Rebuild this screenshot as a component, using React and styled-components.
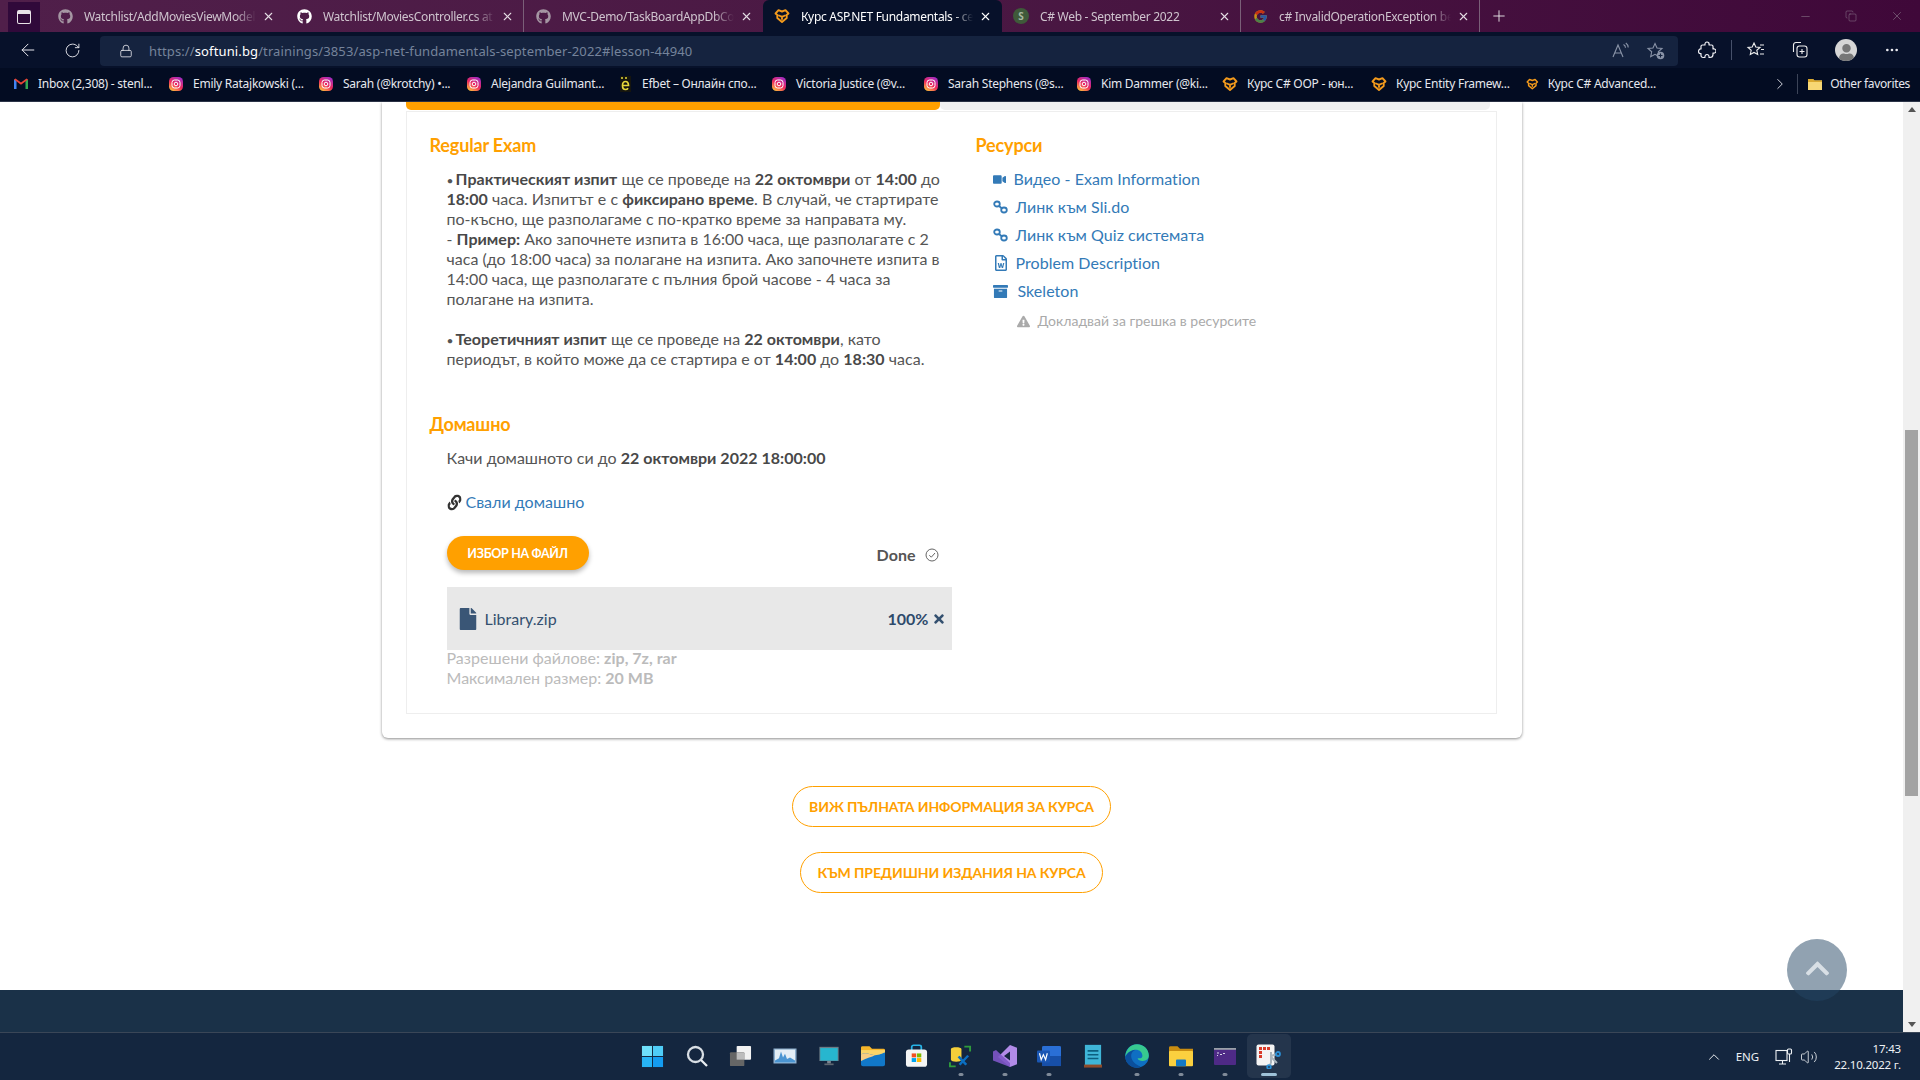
import React from 'react'
import styled, { createGlobalStyle } from 'styled-components'
import { ArrowLeft, RotateCw, Lock, X, Plus, Minus, Copy, ChevronRight, ChevronUp, MoreHorizontal, Volume2 } from 'lucide-react'
import { FaGithub, FaVideo, FaRegFileWord, FaArchive, FaExclamationTriangle, FaFile, FaTimes, FaLink, FaUser, FaChevronUp } from 'react-icons/fa'
import { FcGoogle } from 'react-icons/fc'

const GlobalStyle = createGlobalStyle`
    html, body {
        margin: 0;
        height: 100%;
        overflow: hidden;
        background: #fff;
    }
    * {
        box-sizing: border-box;
    }
`

const Screen = styled.div`
    display: flex;
    flex-direction: column;
    height: 1080px;
    width: 1920px;
    font-family: 'Lato', 'Noto Sans', sans-serif;
`

/* browser chrome */
const TabStrip = styled.div`
    display: flex;
    height: 32px;
    background: linear-gradient(90deg, #501f4a 0%, #4a1843 50%, #3f0839 100%);
    font-family: 'Noto Sans', sans-serif;
    font-size: 12px;
`
const TabMenu = styled.div`
    width: 32px;
    height: 30px;
    margin: 2px 6px 0 8px;
    background: #30093a;
    display: flex;
    align-items: center;
    justify-content: center;
`
const TabMenuGlyph = styled.div`
    width: 14px;
    height: 14px;
    border: 1.5px solid #e8e2e8;
    border-top-width: 4px;
    border-radius: 2px;
`
const Tab = styled.div`
    width: 239px;
    height: 32px;
    display: flex;
    align-items: center;
    padding: 0 9px 0 11px;
    color: ${p => (p.$active ? '#fff' : '#cfc4ce')};
    background: ${p => (p.$active ? '#07112a' : 'transparent')};
    border-right: 1px solid ${p => (p.$sep ? '#7a5f78' : 'transparent')};
    border-radius: ${p => (p.$active ? '6px 6px 0 0' : '0')};
`
const TabIcon = styled.span`
    width: 16px;
    height: 16px;
    flex: none;
    display: flex;
    align-items: center;
    justify-content: center;
    color: ${p => p.$color || '#a596a3'};
    opacity: ${p => p.$dim ? 0.7 : 1};
`
const TabLabel = styled.span`
    flex: 1;
    margin-left: 11px;
    white-space: nowrap;
    overflow: hidden;
    letter-spacing: -0.3px;
    mask-image: linear-gradient(90deg, #000 88%, transparent 100%);
`
const TabClose = styled.span`
    margin-left: 6px;
    display: flex;
    color: ${p => (p.$active ? '#fff' : '#e4dce3')};
`
const Favicon = styled.span`
    width: 16px;
    height: 16px;
    border-radius: 50%;
    background: #3f5a3a;
    color: #a8b8a0;
    font-size: 10px;
    font-weight: 700;
    display: flex;
    align-items: center;
    justify-content: center;
`
const NewTab = styled.div`
    width: 32px;
    margin-left: 3px;
    display: flex;
    align-items: center;
    justify-content: center;
    color: #eee;
`
const WindowButtons = styled.div`
    margin-left: auto;
    display: flex;
    color: #8f7f90;
`
const WindowButton = styled.div`
    width: 46px;
    display: flex;
    align-items: center;
    justify-content: center;
`

const Toolbar = styled.div`
    height: 36px;
    display: flex;
    align-items: center;
    padding: 0 6px;
    background: #07112a;
    color: #e8e8ee;
`
const ToolSlot = styled.div`
    width: ${p => p.$w || 44}px;
    height: 30px;
    flex: none;
    margin-left: ${p => p.$ml || 0}px;
    display: flex;
    align-items: center;
    justify-content: center;
`
const AddressBar = styled.div`
    width: 1578px;
    height: 30px;
    margin: 2px 7px 0 6px;
    padding: 0 0 0 19px;
    border-radius: 4px;
    background: #15233f;
    display: flex;
    align-items: center;
    color: #75839b;
    font-family: 'Noto Sans', sans-serif;
    font-size: 13px;
`
const AddressText = styled.span`
    margin-left: 16px;
    flex: 1;
    letter-spacing: 0.12px;
    b {
        color: #fff;
        font-weight: 400;
    }
`
const ToolDivider = styled.div`
    width: 1px;
    height: 20px;
    margin: 0 2px;
    background: #46506a;
`
const Avatar = styled.div`
    width: 22px;
    height: 22px;
    border-radius: 50%;
    background: #d6d6d6;
    color: #777;
    overflow: hidden;
    display: flex;
    align-items: flex-end;
    justify-content: center;
`

const Bookmarks = styled.div`
    height: 34px;
    display: flex;
    align-items: center;
    padding: 0 0 2px 13px;
    background: #030c22;
    border-bottom: 1px solid #2c3448;
    color: #e6e8ee;
    font-family: 'Noto Sans', sans-serif;
    font-size: 12px;
    letter-spacing: -0.25px;
`
const Bookmark = styled.div`
    width: ${p => p.$w}px;
    flex: none;
    display: flex;
    align-items: center;
    gap: 9px;
    white-space: nowrap;
`
const BookmarkEnd = styled.div`
    margin-left: auto;
    display: flex;
    align-items: center;
    padding-right: 10px;
    white-space: nowrap;
    letter-spacing: -0.35px;
`
const BookmarkDivider = styled.div`
    width: 1px;
    height: 20px;
    margin: 0 9px 0 8px;
    background: #3c4458;
`
const FolderGlyph = styled.svg`
    margin-right: 7px;
`

/* page */
const Viewport = styled.div`
    flex: 1;
    min-height: 0;
    display: flex;
    position: relative;
`
const Page = styled.div`
    flex: 1;
    display: flex;
    flex-direction: column;
    align-items: center;
    color: #555;
    font-size: 16px;
    line-height: 20px;
`
const Card = styled.div`
    width: 1140px;
    padding: 0 25px 24px 24px;
    background: #fff;
    border-radius: 0 0 6px 6px;
    box-shadow: 0 1px 3px rgba(0, 0, 0, 0.45);
`
const LessonTabs = styled.div`
    display: flex;
    height: 8px;
`
const LessonTab = styled.div`
    width: ${p => p.$w}px;
    background: ${p => p.$bg};
    border-radius: 0 0 5px 5px;
`
const Panel = styled.div`
    display: grid;
    grid-template-columns: 546px 1fr;
    height: 603px;
    margin-top: 1px;
    border: 1px solid #eee;
`
const Column = styled.div`
    padding: 21px 0 0 23px;
`
const Heading = styled.h3`
    margin: 0 0 12px;
    font-size: 18px;
    line-height: 24px;
    font-weight: 700;
    color: #ffa000;
    letter-spacing: -0.15px;
`
const Body = styled.div`
    padding-left: 17px;
    width: 522px;
    letter-spacing: 0.02px;
    b {
        font-weight: 700;
        color: #484848;
    }
`
const Bullet = styled.span`
    font-size: 12px;
    line-height: 1;
    margin-right: -2px;
`
const ExamText = styled(Body)`
    margin-bottom: 43px;
`
const DownloadLink = styled.a`
    display: flex;
    align-items: center;
    gap: 4px;
    margin-top: 24px;
    color: #337ab7;
    svg {
        color: #333;
        transform: rotate(-8deg);
    }
`
const UploadRow = styled.div`
    display: flex;
    align-items: center;
    justify-content: space-between;
    margin-top: 24px;
    padding-right: 13px;
`
const PickButton = styled.button`
    width: 142px;
    height: 34px;
    border: none;
    border-radius: 17px;
    background: #ffa000;
    color: #fff;
    font-family: inherit;
    font-size: 12.5px;
    font-weight: 700;
    letter-spacing: -0.3px;
    box-shadow: 0 3px 5px rgba(0, 0, 0, 0.28);
`
const Status = styled.div`
    display: flex;
    align-items: center;
    gap: 9px;
    margin-top: 4px;
    font-weight: 700;
`
const FileRow = styled.div`
    display: flex;
    align-items: center;
    height: 63px;
    margin-top: 17px;
    padding: 0 6px 0 10px;
    background: #e8e8e8;
    color: #34506f;
`
const FileName = styled.span`
    margin-left: 6px;
    flex: 1;
`
const FilePercent = styled.b`
    margin-right: 3px;
    font-weight: 700;
    && {
        color: #2e4a6b;
    }
`
const Hints = styled.div`
    margin-top: -2px;
    color: #bbb;
    && b {
        color: #bbb;
    }
`
const ResourceList = styled.ul`
    list-style: none;
    margin: -4px 0 0;
    padding: 0 0 0 17px;
`
const ResourceItem = styled.li`
    height: 28px;
    display: flex;
    align-items: center;
    gap: ${p => p.$gap}px;
    color: #337ab7;
    letter-spacing: 0.05px;
`
const ReportLine = styled.div`
    display: flex;
    align-items: center;
    gap: 8px;
    height: 30px;
    padding-left: 41px;
    margin-top: 1px;
    color: #aaa;
    font-size: 14px;
`
const CourseLinks = styled.div`
    display: flex;
    flex-direction: column;
    align-items: center;
    gap: 25px;
    margin-top: 48px;
`
const OutlineLink = styled.a`
    height: 41px;
    width: ${p => p.$w}px;
    display: flex;
    align-items: center;
    justify-content: center;
    border: 1px solid #ffa000;
    border-radius: 21px;
    color: #ffa000;
    font-size: 14px;
    font-weight: 700;
    letter-spacing: -0.1px;
`
const Footer = styled.div`
    width: 100%;
    height: 42px;
    margin-top: auto;
    background: #1a3148;
`
const ToTop = styled.div`
    position: absolute;
    left: 1787px;
    top: 837px;
    width: 60px;
    height: 62px;
    padding-bottom: 4px;
    border-radius: 50%;
    background: rgba(35, 70, 100, 0.5);
    display: flex;
    align-items: center;
    justify-content: center;
    color: #d8dfe5;
`
const Scrollbar = styled.div`
    width: 17px;
    display: flex;
    flex-direction: column;
    justify-content: space-between;
    align-items: center;
    padding: 5px 0;
    background: #f0f0f0;
    position: relative;
`
const ScrollThumb = styled.div`
    position: absolute;
    top: 328px;
    left: 2px;
    width: 13px;
    height: 366px;
    background: #a3a3a3;
`
const ScrollArrow = styled.div`
    width: 0;
    height: 0;
    border-left: 4px solid transparent;
    border-right: 4px solid transparent;
    ${p => (p.$up ? 'border-bottom: 5px solid #555;' : 'border-top: 5px solid #555;')}
`

/* windows taskbar */
const Taskbar = styled.div`
    height: 48px;
    display: grid;
    grid-template-columns: 1fr auto 1fr;
    padding-left: 1px;
    background: #14263f;
    border-top: 1px solid #3a4657;
`
const TaskIcons = styled.div`
    display: flex;
    grid-column: 2;
`
const TaskCell = styled.div`
    width: 44px;
    height: 44px;
    margin-top: 1px;
    display: flex;
    align-items: center;
    justify-content: center;
    position: relative;
    border-radius: 5px;
    background: ${p => (p.$active ? 'rgba(255,255,255,0.07)' : 'transparent')};
`
const RunDot = styled.span`
    position: absolute;
    bottom: 2px;
    left: 50%;
    transform: translateX(-50%);
    width: ${p => (p.$active ? 16 : 5)}px;
    height: 3px;
    border-radius: 2px;
    background: ${p => (p.$active ? '#9fc2d8' : '#7f8a98')};
`
const Tray = styled.div`
    grid-column: 3;
    display: flex;
    align-items: center;
    justify-content: flex-end;
    padding-right: 19px;
    color: #eef1f4;
    font-family: 'Noto Sans', sans-serif;
    font-size: 11.5px;
`
const TrayItem = styled.div`
    display: flex;
    align-items: center;
    margin-right: ${p => p.$mr}px;
`
const Clock = styled.div`
    text-align: right;
    line-height: 16px;
    letter-spacing: -0.2px;
`

const SoftUni = ({ size = 16 }) => (
    <svg width={size} height={size} viewBox="0 0 16 16" fill="none" stroke="#f39a1c" strokeWidth="1.900" strokeLinejoin="round" strokeLinecap="round">
        <path d="M1.500 5.500L4.500 2.200 8 3.500l3.500-1.300 3 3.300-1.800 1.500v3L8 14 3.300 10V7z" />
        <path d="M5 7.500l3 1.300 3-1.300M8 8.800v2.200" />
    </svg>
)

let igCount = 0
const Insta = () => {
    const id = `ig${igCount++}`
    return (
        <svg width="16" height="16" viewBox="0 0 16 16">
            <defs>
                <linearGradient id={id} x1="0.2" y1="1" x2="0.8" y2="0">
                    <stop offset="0" stopColor="#fdc13c" />
                    <stop offset="0.45" stopColor="#ee2a5b" />
                    <stop offset="1" stopColor="#a02cc8" />
                </linearGradient>
            </defs>
            <rect x="1" y="1" width="14" height="14" rx="4.500" fill={`url(#${id})`} />
            <rect x="4" y="4" width="8" height="8" rx="2.500" fill="none" stroke="#fff" strokeWidth="1" />
            <circle cx="8" cy="8" r="1.800" fill="none" stroke="#fff" strokeWidth="1" />
        </svg>
    )
}

const Gmail = () => (
    <svg width="16" height="16" viewBox="0 0 16 16">
        <path d="M1 13V3.500L3.500 4v9z" fill="#4285f4" />
        <path d="M15 13V3.500L12.500 4v9z" fill="#34a853" />
        <path d="M1 3.500l7 5.300 7-5.300-1.500-1L8 6.500 2.500 2.500z" fill="#ea4335" />
    </svg>
)

const Efbet = () => (
    <svg width="16" height="18" viewBox="0 0 16 18">
        <rect x="3" y="1" width="11" height="16" fill="#15150f" />
        <path d="M5.500 10.500h6c0-3-1.300-4-3-4s-3 1.500-3 4 1.300 4 3 4c1 0 2-.4 2.600-1.200" fill="none" stroke="#e6d83a" strokeWidth="1.700" />
        <circle cx="5" cy="3" r="1" fill="#e6d83a" />
        <circle cx="9" cy="3" r="1" fill="#e6d83a" />
    </svg>
)

const ChainIcon = () => (
    <svg width="15" height="14" viewBox="0 0 15 14" fill="none" stroke="#337ab7" strokeWidth="1.800">
        <ellipse cx="4" cy="4" rx="2.800" ry="2.500" />
        <ellipse cx="11" cy="10" rx="2.800" ry="2.500" />
        <path d="M6 6l3 2.500" />
    </svg>
)

const CheckCircle = () => (
    <svg width="14" height="14" viewBox="0 0 14 14" fill="none" stroke="#555" strokeWidth="0.9">
        <circle cx="7" cy="7" r="6" />
        <path d="M4.300 7.200l2 2 3.700-4.200" />
    </svg>
)

const ReadAloud = () => (
    <svg width="20" height="20" viewBox="0 0 20 20" fill="none" stroke="#8a94a8" strokeWidth="1.100">
        <path d="M3 16L8 4l5 12M5 12h6" />
        <path d="M13.500 3.500c1.500.8 2 2 2 3.300M15.800 2c1.700 1.200 2.400 2.800 2.400 4.500" />
    </svg>
)

const FavAdd = () => (
    <svg width="20" height="20" viewBox="0 0 20 20" fill="none" stroke="#8a94a8" strokeWidth="1.100">
        <path d="M9 2.500l2 4.500 5 .5-3.700 3.300 1 4.900L9 13.300l-4.300 2.400 1-4.900L2 7.500l5-.5z" />
        <circle cx="14.500" cy="14.500" r="3.800" fill="#8a94a8" stroke="none" />
        <path d="M14.500 12.500v4M12.500 14.500h4" stroke="#15233f" />
    </svg>
)

const ExtensionGlyph = () => (
    <svg width="18" height="18" viewBox="0 0 18 18" fill="none" stroke="#f0f0f4" strokeWidth="1.200" strokeLinejoin="round">
        <path d="M7 4c-.3-2 .8-3 2-3s2.500 1 2 3h2.500a1.500 1.500 0 0 1 1.500 1.500V8c2-.5 3 .8 3 2s-1 2.500-3 2v1.500a3 3 0 0 1-3 3h-1c.3-2-.8-3-2-3s-2.300 1-2 3H5a2 2 0 0 1-2-2v-2c-2 .3-2.500-1-2.500-2S1.500 7.500 3 8V5.500A1.500 1.500 0 0 1 4.500 4z" />
    </svg>
)

const FavList = () => (
    <svg width="20" height="20" viewBox="0 0 20 20" fill="none" stroke="#eee" strokeWidth="1.100">
        <path d="M8 3l1.800 4 4.200.5-3.200 2.800.9 4.200L8 12.400l-3.700 2.100.9-4.200L2 7.500 6.200 7z" />
        <path d="M14 5h4M15 9.500h3M14 14h4" />
    </svg>
)

const Collections = () => (
    <svg width="20" height="20" viewBox="0 0 20 20" fill="none" stroke="#eee" strokeWidth="1.100">
        <path d="M11 2.500H6a2.500 2.500 0 0 0-2.500 2.500v7" />
        <rect x="7" y="6" width="10" height="11" rx="2.500" />
        <path d="M12 9v5M9.500 11.500h5" />
    </svg>
)

const WinLogo = () => (
    <svg width="23" height="23" viewBox="0 0 24 24">
        <rect x="1" y="1" width="10.500" height="10.500" fill="#6fe0fb" />
        <rect x="12.500" y="1" width="10.500" height="10.500" fill="#4fcdf7" />
        <rect x="1" y="12.500" width="10.500" height="10.500" fill="#27b4f5" />
        <rect x="12.500" y="12.500" width="10.500" height="10.500" fill="#149cf0" />
    </svg>
)
const SearchGlyph = () => (
    <svg width="24" height="24" viewBox="0 0 24 24" fill="none" stroke="#e9eef2" strokeWidth="2.300">
        <circle cx="10.500" cy="10.500" r="7.500" stroke="#d8dee4" />
        <path d="M16 16l6 6" />
    </svg>
)
const TaskView = () => (
    <svg width="23" height="22" viewBox="0 0 24 24" preserveAspectRatio="none">
        <rect x="8" y="1" width="15" height="15" rx="1" fill="#f2f2f2" />
        <rect x="1" y="8" width="15" height="15" rx="1" fill="#666" />
        <rect x="8" y="8" width="8" height="8" fill="#bdbdbd" />
    </svg>
)
const PerfMon = () => (
    <svg width="24" height="18" viewBox="0 0 24 24" preserveAspectRatio="none">
        <rect x="0.500" y="2" width="23" height="20" fill="#8fb0cf" />
        <rect x="2" y="3.500" width="20" height="17" fill="#e4eef6" />
        <path d="M2 18l4-3 2-9 2 8 2-5 2 7 3-2 5 4v2.500H2z" fill="#4b95d2" />
    </svg>
)
const Monitor = () => (
    <svg width="22" height="20" viewBox="0 0 24 24" preserveAspectRatio="none">
        <rect x="1.500" y="1" width="21" height="17" fill="#6c7b86" />
        <rect x="2.500" y="2.500" width="19" height="15" fill="#27b6cf" />
        <rect x="10" y="18" width="4" height="3" fill="#7d8791" />
        <rect x="7" y="21" width="10" height="2" fill="#5e6770" />
    </svg>
)
const Explorer = () => (
    <svg width="24" height="22" viewBox="0 0 24 26" preserveAspectRatio="none">
        <path d="M0 3a1.500 1.500 0 0 1 1.500-1.500h7l2.500 3h11.500A1.500 1.500 0 0 1 24 6v6H0z" fill="#f6b52a" />
        <rect y="6" width="24" height="10" fill="#fbd568" />
        <path d="M0 11c6-3 9 1 14 1s7-2 10-3v14a2 2 0 0 1-2 2H2a2 2 0 0 1-2-2z" fill="#1178c9" />
        <path d="M0 11c6-3 9 1 14 1-3 2-8 3-14 7z" fill="#f9cd83" />
    </svg>
)
const Store = () => (
    <svg width="23" height="24" viewBox="0 0 24 28" preserveAspectRatio="none">
        <path d="M7 8V3.500A2 2 0 0 1 9 1.500h6a2 2 0 0 1 2 2V8" fill="none" stroke="#27b4e8" strokeWidth="1.800" />
        <rect x="1" y="6.500" width="22" height="20" rx="3" fill="#f4f5f5" />
        <rect x="7" y="11" width="4.600" height="4.600" fill="#f25022" />
        <rect x="12.400" y="11" width="4.600" height="4.600" fill="#7fba00" />
        <rect x="7" y="16.400" width="4.600" height="4.600" fill="#00a4ef" />
        <rect x="12.400" y="16.400" width="4.600" height="4.600" fill="#ffb900" />
    </svg>
)
const DbTools = () => (
    <svg width="23" height="23" viewBox="0 0 24 28" preserveAspectRatio="none">
        <path d="M2 5c0-3 11-3 11 0v13c0 3-11 3-11 0z" fill="#f5cf3a" />
        <path d="M16 2h6v6" fill="none" stroke="#2e9b3c" strokeWidth="2" />
        <path d="M1 21v5h6" fill="none" stroke="#2e9b3c" strokeWidth="2" />
        <path d="M10 14l8 10M20 13l-9 11" stroke="#0b6fc2" strokeWidth="2.600" />
    </svg>
)
const VisualStudio = () => (
    <svg width="24" height="24" viewBox="0 0 24 26" preserveAspectRatio="none">
        <path d="M17 1l7 3v18l-7 3-12-11z" fill="#b18be8" />
        <path d="M17 8v10l-6-5z" fill="#14263f" />
        <path d="M0 8l3-1.500 14 14V25L0 18z" fill="#7e57c8" opacity="0.9" />
    </svg>
)
const Word = () => (
    <svg width="24" height="22" viewBox="0 0 24 24" preserveAspectRatio="none">
        <rect x="5" y="1" width="19" height="22" rx="1.500" fill="#2a6fd6" />
        <rect x="5" y="12" width="19" height="11" fill="#174fa8" />
        <rect x="0" y="6" width="13" height="13" rx="1" fill="#1a56b3" />
        <path d="M2.500 9l1.700 7 2.200-5.500L8.600 16l1.700-7" fill="none" stroke="#fff" strokeWidth="1.200" />
    </svg>
)
const Notepad = () => (
    <svg width="18" height="24" viewBox="0 0 20 28" preserveAspectRatio="none">
        <rect x="1" y="1" width="18" height="25" fill="#3fb5d8" />
        <rect y="24" width="20" height="3.500" fill="#8f4b2a" />
        <path d="M4 8h12M4 12.500h12M4 17h12" stroke="#0c5f80" strokeWidth="1.800" />
    </svg>
)
const Edge = () => (
    <svg width="24" height="24" viewBox="0 0 24 24">
        <circle cx="12" cy="12" r="11.800" fill="#0f6fc2" />
        <path d="M12 .2C18.800.2 23.800 5.400 23.800 11.600c0 3.400-2.600 5.400-6 5.400-2.800 0-4.800-1-5.200-2.800 3.200.6 5-.6 4.800-2.800C17 7.800 14 5.600 10.400 5.800 5.800 6 2 9.400.3 12.800.6 5.600 5.600.2 12 .2z" fill="#37c98f" />
        <path d="M.3 12.800C2 9.400 5.800 6 10.400 5.800c-3 1.200-4.600 4-4.200 7 .5 4.200 4.200 8 9.400 9.800C14.500 23.500 13 23.800 12 23.800 5.400 23.800.2 18.800.3 12.800z" fill="#0b4f9c" />
    </svg>
)
const Folder = () => (
    <svg width="24" height="22" viewBox="0 0 24 26" preserveAspectRatio="none">
        <path d="M0 3a1.500 1.500 0 0 1 1.500-1.500h7L11 4.500h13V9H0z" fill="#c98d11" />
        <rect y="7" width="24" height="18" rx="1" fill="#fbd03f" />
        <rect x="7" y="17" width="10" height="8" rx="1" fill="#1479c4" />
    </svg>
)
const Terminal = () => (
    <svg width="22" height="17" viewBox="0 0 22 17">
        <rect width="22" height="17" rx="1" fill="#4e2a86" />
        <rect width="22" height="1.800" fill="#9aa0a8" />
        <path d="M3 5h2M6 6.500h2M9 5.500h2M3 7.500h1" stroke="#d8d8e8" strokeWidth="1" />
    </svg>
)
const Snip = () => (
    <svg width="25" height="25" viewBox="0 0 25 25">
        <rect x="0.500" y="0.500" width="18" height="21" rx="2" fill="#f4f4f4" />
        <rect x="3" y="3" width="3" height="3" fill="#d83b2a" />
        <rect x="7" y="3" width="3" height="3" fill="#d83b2a" />
        <rect x="11" y="3" width="3" height="3" fill="#d83b2a" />
        <rect x="3" y="7" width="3" height="3" fill="#d83b2a" />
        <rect x="3" y="11" width="3" height="3" fill="#d83b2a" />
        <path d="M15 8v11M15 13l6 6M15 19l-1 2M15 12l6-2" fill="none" stroke="#a8b4bc" strokeWidth="2" />
        <circle cx="22" cy="10" r="2" fill="none" stroke="#2a8fd6" strokeWidth="1.800" />
        <circle cx="13" cy="23" r="1.800" fill="none" stroke="#2a8fd6" strokeWidth="1.800" />
    </svg>
)
const NetworkGlyph = () => (
    <svg width="18" height="18" viewBox="0 0 18 18" fill="none" stroke="#eef1f4" strokeWidth="1.100">
        <rect x="1" y="2.500" width="11" height="10" />
        <path d="M4 16h7M7.500 13v3" />
        <rect x="12.500" y="1" width="4" height="5" rx="1" fill="#14263f" />
        <path d="M14.500 6v8" />
    </svg>
)

const tabs = [
    { icon: <FaGithub size={15} />, label: 'Watchlist/AddMoviesViewModel.cs' },
    { icon: <FaGithub size={15} />, color: '#fff', label: 'Watchlist/MoviesController.cs at master', sep: true },
    { icon: <FaGithub size={15} />, label: 'MVC-Demo/TaskBoardAppDbContext.cs' },
    { icon: <SoftUni />, label: 'Курс ASP.NET Fundamentals - септември', active: true },
    { icon: <Favicon>S</Favicon>, label: 'C# Web - September 2022', sep: true },
    { icon: <FcGoogle size={15} />, dim: true, label: 'c# InvalidOperationException be careful', sep: true },
]

const bookmarks = [
    { icon: <Gmail />, label: 'Inbox (2,308) - stenl...', w: 155 },
    { icon: <Insta />, label: 'Emily Ratajkowski (...', w: 150 },
    { icon: <Insta />, label: 'Sarah (@krotchy) •...', w: 148 },
    { icon: <Insta />, label: 'Alejandra Guilmant...', w: 151 },
    { icon: <Efbet />, label: 'Efbet – Онлайн спо...', w: 154 },
    { icon: <Insta />, label: 'Victoria Justice (@v...', w: 152 },
    { icon: <Insta />, label: 'Sarah Stephens (@s...', w: 153 },
    { icon: <Insta />, label: 'Kim Dammer (@ki...', w: 146 },
    { icon: <SoftUni />, label: 'Курс C# OOP - юн...', w: 149 },
    { icon: <SoftUni />, label: 'Курс Entity Framew...', w: 155 },
    { icon: <SoftUni />, label: 'Курс C# Advanced...', w: 130 },
]

const taskItems = [
    { icon: <WinLogo /> },
    { icon: <SearchGlyph /> },
    { icon: <TaskView /> },
    { icon: <PerfMon /> },
    { icon: <Monitor /> },
    { icon: <Explorer /> },
    { icon: <Store /> },
    { icon: <DbTools />, run: true },
    { icon: <VisualStudio />, run: true },
    { icon: <Word />, run: true },
    { icon: <Notepad /> },
    { icon: <Edge />, run: true },
    { icon: <Folder />, run: true },
    { icon: <Terminal />, run: true },
    { icon: <Snip />, run: true, active: true },
]

const App = () => {
    return (
        <Screen>
            <GlobalStyle />
            <TabStrip>
                <TabMenu><TabMenuGlyph /></TabMenu>
                {tabs.map(tab => (
                    <Tab key={tab.label} $active={tab.active} $sep={tab.sep}>
                        <TabIcon $color={tab.color} $dim={tab.dim}>{tab.icon}</TabIcon>
                        <TabLabel>{tab.label}</TabLabel>
                        <TabClose $active={tab.active}><X size={13} /></TabClose>
                    </Tab>
                ))}
                <NewTab><Plus size={18} strokeWidth={1.2} /></NewTab>
                <WindowButtons>
                    <WindowButton><Minus size={13} strokeWidth={1} /></WindowButton>
                    <WindowButton><Copy size={12} strokeWidth={1} /></WindowButton>
                    <WindowButton><X size={14} strokeWidth={1} /></WindowButton>
                </WindowButtons>
            </TabStrip>
            <Toolbar>
                <ToolSlot><ArrowLeft size={20} strokeWidth={1.2} /></ToolSlot>
                <ToolSlot><RotateCw size={17} strokeWidth={1.3} /></ToolSlot>
                <AddressBar>
                    <Lock size={14} strokeWidth={1.4} color="#e8e8ee" />
                    <AddressText>https://<b>softuni.bg</b>/trainings/3853/asp-net-fundamentals-september-2022#lesson-44940</AddressText>
                    <ToolSlot $w={28}><ReadAloud /></ToolSlot>
                    <ToolSlot><FavAdd /></ToolSlot>
                </AddressBar>
                <ToolSlot><ExtensionGlyph /></ToolSlot>
                <ToolDivider />
                <ToolSlot><FavList /></ToolSlot>
                <ToolSlot><Collections /></ToolSlot>
                <ToolSlot $ml={2}><Avatar><FaUser size={17} /></Avatar></ToolSlot>
                <ToolSlot $ml={2}><MoreHorizontal size={16} /></ToolSlot>
            </Toolbar>
            <Bookmarks>
                {bookmarks.map(item => (
                    <Bookmark key={item.label} $w={item.w}>
                        {item.icon}
                        <span>{item.label}</span>
                    </Bookmark>
                ))}
                <BookmarkEnd>
                    <ChevronRight size={18} strokeWidth={1.2} />
                    <BookmarkDivider />
                    <FolderGlyph width="16" height="16" viewBox="0 0 16 16">
                        <path d="M1 3h5l1.500 1.500H15V14H1z" fill="#f7d774" />
                        <path d="M1 3h5l1.500 1.500H15V6H1z" fill="#dba92e" />
                    </FolderGlyph>
                    Other favorites
                </BookmarkEnd>
            </Bookmarks>
            <Viewport>
                <Page>
                    <Card>
                        <LessonTabs>
                            <LessonTab $w={534} $bg="#ffa000" />
                            <LessonTab $w={550} $bg="#f0f0f0" />
                        </LessonTabs>
                        <Panel>
                            <Column>
                                <Heading>Regular Exam</Heading>
                                <ExamText>
                                    <Bullet>•</Bullet> <b>Практическият изпит</b> ще се проведе на <b>22 октомври</b> от <b>14:00</b> до <b>18:00</b> часа. Изпитът е с <b>фиксирано време</b>. В случай, че стартирате по-късно, ще разполагаме с по-кратко време за направата му.<br />
                                    - <b>Пример:</b> Ако започнете изпита в 16:00 часа, ще разполагате с 2 часа (до 18:00 часа) за полагане на изпита. Ако започнете изпита в 14:00 часа, ще разполагате с пълния брой часове - 4 часа за полагане на изпита.<br />
                                    <br />
                                    <Bullet>•</Bullet> <b>Теоретичният изпит</b> ще се проведе на <b>22 октомври</b>, като периодът, в който може да се стартира е от <b>14:00</b> до <b>18:30</b> часа.
                                </ExamText>
                                <Heading>Домашно</Heading>
                                <Body>
                                    Качи домашното си до <b>22 октомври 2022 18:00:00</b>
                                    <DownloadLink><FaLink size={15} /> Свали домашно</DownloadLink>
                                    <UploadRow>
                                        <PickButton>ИЗБОР НА ФАЙЛ</PickButton>
                                        <Status>Done <CheckCircle /></Status>
                                    </UploadRow>
                                    <FileRow>
                                        <FaFile size={22} color="#3a5676" />
                                        <FileName>Library.zip</FileName>
                                        <FilePercent>100%</FilePercent>
                                        <FaTimes size={14} />
                                    </FileRow>
                                    <Hints>
                                        Разрешени файлове: <b>zip, 7z, rar</b><br />
                                        Максимален размер: <b>20 MB</b>
                                    </Hints>
                                </Body>
                            </Column>
                            <Column>
                                <Heading>Ресурси</Heading>
                                <ResourceList>
                                    <ResourceItem $gap={8}><FaVideo size={13} /> Видео - Exam Information</ResourceItem>
                                    <ResourceItem $gap={8}><ChainIcon /> Линк към Sli.do</ResourceItem>
                                    <ResourceItem $gap={8}><ChainIcon /> Линк към Quiz системата</ResourceItem>
                                    <ResourceItem $gap={7}><FaRegFileWord size={16} /> Problem Description</ResourceItem>
                                    <ResourceItem $gap={10}><FaArchive size={15} /> Skeleton</ResourceItem>
                                </ResourceList>
                                <ReportLine><FaExclamationTriangle size={13} /> Докладвай за грешка в ресурсите</ReportLine>
                            </Column>
                        </Panel>
                    </Card>
                    <CourseLinks>
                        <OutlineLink $w={319}>ВИЖ ПЪЛНАТА ИНФОРМАЦИЯ ЗА КУРСА</OutlineLink>
                        <OutlineLink $w={303}>КЪМ ПРЕДИШНИ ИЗДАНИЯ НА КУРСА</OutlineLink>
                    </CourseLinks>
                    <Footer />
                </Page>
                <ToTop><FaChevronUp size={27} /></ToTop>
                <Scrollbar>
                    <ScrollArrow $up />
                    <ScrollThumb />
                    <ScrollArrow />
                </Scrollbar>
            </Viewport>
            <Taskbar>
                <TaskIcons>
                    {taskItems.map((item, i) => (
                        <TaskCell key={i} $active={item.active}>
                            {item.icon}
                            {item.run && <RunDot $active={item.active} />}
                        </TaskCell>
                    ))}
                </TaskIcons>
                <Tray>
                    <TrayItem $mr={13}><ChevronUp size={18} strokeWidth={1.3} /></TrayItem>
                    <TrayItem $mr={16}>ENG</TrayItem>
                    <TrayItem $mr={7}><NetworkGlyph /></TrayItem>
                    <TrayItem $mr={16}><Volume2 size={18} strokeWidth={1.1} /></TrayItem>
                    <Clock>17:43<br />22.10.2022 г.</Clock>
                </Tray>
            </Taskbar>
        </Screen>
    )
}

export default App
